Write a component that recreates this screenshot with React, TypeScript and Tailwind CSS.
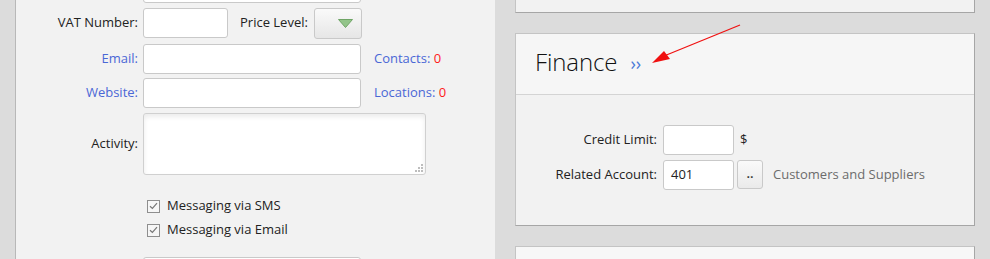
const font = { fontFamily: '"Open Sans", "Liberation Sans", sans-serif' };

function TextBox({ className = "", value = "" }: { className?: string; value?: string }) {
  return (
    <div
      className={`shrink-0 h-[30px] bg-white border border-[#c9c9c9] rounded-[3px] flex items-center px-[7px] text-[13px] text-[#222] ${className}`}
    >
      {value}
    </div>
  );
}

function Check({ label }: { label: string }) {
  return (
    <div className="flex items-center h-[22px] text-[13px] text-[#222]">
      <span className="w-[13px] h-[13px] border border-[#8e8e8e] bg-[#f6f6f6] flex items-center justify-center ml-[4px] mr-[7px]">
        <svg width="9" height="8" viewBox="0 0 9 8">
          <path d="M1 4.2 L3.4 6.5 L8 1.2" fill="none" stroke="#777" strokeWidth="1.2" />
        </svg>
      </span>
      {label}
    </div>
  );
}

function LeftPanel() {
  return (
    <div className="w-[480px] shrink-0 bg-[#f2f2f2] border-l border-[#b8b8b8] flex flex-col [&>*]:shrink-0">
      <div className="flex -mt-[27px]">
        <div className="w-[122px]" />
        <TextBox className="ml-[5px] w-[218px]" />
      </div>

      <div className="flex items-center mt-[5px] h-[30px]">
        <div className="w-[122px] text-right text-[13px] text-[#222]">VAT Number:</div>
        <TextBox className="ml-[5px] w-[85px]" />
        <span className="ml-[12px] text-[13px] text-[#222]">Price Level:</span>
        <div className="ml-[6px] w-[48px] h-[31px] border border-[#c9c9c9] rounded-[3px] bg-gradient-to-b from-[#fafafa] to-[#e6e6e6] flex items-center justify-end pr-[8px]">
          <svg width="15" height="9" viewBox="0 0 15 9">
            <path d="M0.5 0.5 H14.5 L7.5 8.5 Z" fill="#93c48a" stroke="#6fa566" strokeWidth="1" />
          </svg>
        </div>
      </div>

      <div className="flex items-center mt-[6px] h-[30px]">
        <div className="w-[122px] text-right text-[13px] text-[#4a67d6]">Email:</div>
        <TextBox className="ml-[5px] w-[218px]" />
        <span className="ml-[13px] text-[13px] text-[#4a67d6]">
          Contacts: <span className="text-[#ff1a1a]">0</span>
        </span>
      </div>

      <div className="flex items-center mt-[4px] h-[30px]">
        <div className="w-[122px] text-right text-[13px] text-[#4a67d6]">Website:</div>
        <TextBox className="ml-[5px] w-[218px]" />
        <span className="ml-[13px] text-[13px] text-[#4a67d6]">
          Locations: <span className="text-[#ff1a1a]">0</span>
        </span>
      </div>

      <div className="flex items-center mt-[5px] h-[62px]">
        <div className="w-[122px] text-right text-[13px] text-[#222]">Activity:</div>
        <div className="ml-[5px] w-[283px] h-[62px] bg-white border border-[#d0d0d0] rounded-[3px] shadow-[inset_0_3px_5px_rgba(0,0,0,0.08)] flex items-end justify-end p-[2px]">
          <svg width="8" height="8" viewBox="0 0 8 8">
            <rect x="6" y="0" width="2" height="2" fill="#bdbdbd" />
            <rect x="3" y="3" width="2" height="2" fill="#bdbdbd" />
            <rect x="6" y="3" width="2" height="2" fill="#bdbdbd" />
            <rect x="0" y="6" width="2" height="2" fill="#bdbdbd" />
            <rect x="3" y="6" width="2" height="2" fill="#bdbdbd" />
            <rect x="6" y="6" width="2" height="2" fill="#bdbdbd" />
          </svg>
        </div>
      </div>

      <div className="flex flex-col mt-[20px] ml-[127px] gap-[2px]">
        <Check label="Messaging via SMS" />
        <Check label="Messaging via Email" />
      </div>

      <div className="flex mt-[16px]">
        <div className="w-[122px]" />
        <TextBox className="ml-[5px] w-[218px]" />
      </div>
    </div>
  );
}

function RightPanel() {
  return (
    <div className="w-[460px] shrink-0 flex flex-col [&>*]:shrink-0">
      <div className="h-[13px] bg-[#f2f2f2] border-l border-r border-b border-l-[#c4c4c4] border-r-[#a6a6a6] border-b-[#a6a6a6]" />

      <div className="mt-[20px] border border-[#c4c4c4] border-r-[#a6a6a6] border-b-[#a6a6a6] flex flex-col">
        <div className="h-[61px] bg-[#f6f6f6] border-b border-[#d4d4d4] flex items-center pl-[19px] pb-[4px]">
          <span className="text-[24px] font-light text-[#111] tracking-[-0.1px]">Finance</span>
          <span className="ml-[13px] mt-[2px] text-[18px] text-[#4a7ad8] leading-none">››</span>
        </div>
        <div className="h-[130px] bg-[#f2f2f2] flex flex-col pt-[30px] gap-[5px]">
          <div className="flex items-center h-[30px]">
            <div className="w-[141px] text-right text-[13px] text-[#222]">Credit Limit:</div>
            <TextBox className="ml-[6px] w-[71px]" />
            <span className="ml-[6px] text-[13px] text-[#222]">$</span>
          </div>
          <div className="flex items-center h-[29px]">
            <div className="w-[141px] text-right text-[13px] text-[#222]">Related Account:</div>
            <TextBox className="ml-[6px] w-[71px] h-[29px]" value="401" />
            <div className="ml-[3px] w-[26px] h-[29px] border border-[#c9c9c9] rounded-[3px] bg-gradient-to-b from-[#fafafa] to-[#eaeaea] flex items-center justify-center text-[13px] text-[#333] font-semibold leading-none pb-[2px]">
              ..
            </div>
            <span className="ml-[10px] text-[13px] text-[#6c6c6c]">Customers and Suppliers</span>
          </div>
        </div>
      </div>

      <div className="mt-[20px] h-[40px] bg-[#f7f7f7] border border-[#c4c4c4] border-r-[#a6a6a6]" />
    </div>
  );
}

export default function App() {
  return (
    <div className="relative w-[990px] h-[259px] overflow-hidden bg-[#dcdcdc] flex pl-[15px]" style={font}>
      <LeftPanel />
      <div className="w-[20px] shrink-0" />
      <RightPanel />
      <svg className="absolute left-0 top-0 pointer-events-none" width="990" height="259">
        <line x1="740" y1="25" x2="664" y2="56" stroke="#f01010" strokeWidth="1.2" />
        <path d="M652 63 L664 51 L670 59 Z" fill="#f01010" />
      </svg>
    </div>
  );
}
